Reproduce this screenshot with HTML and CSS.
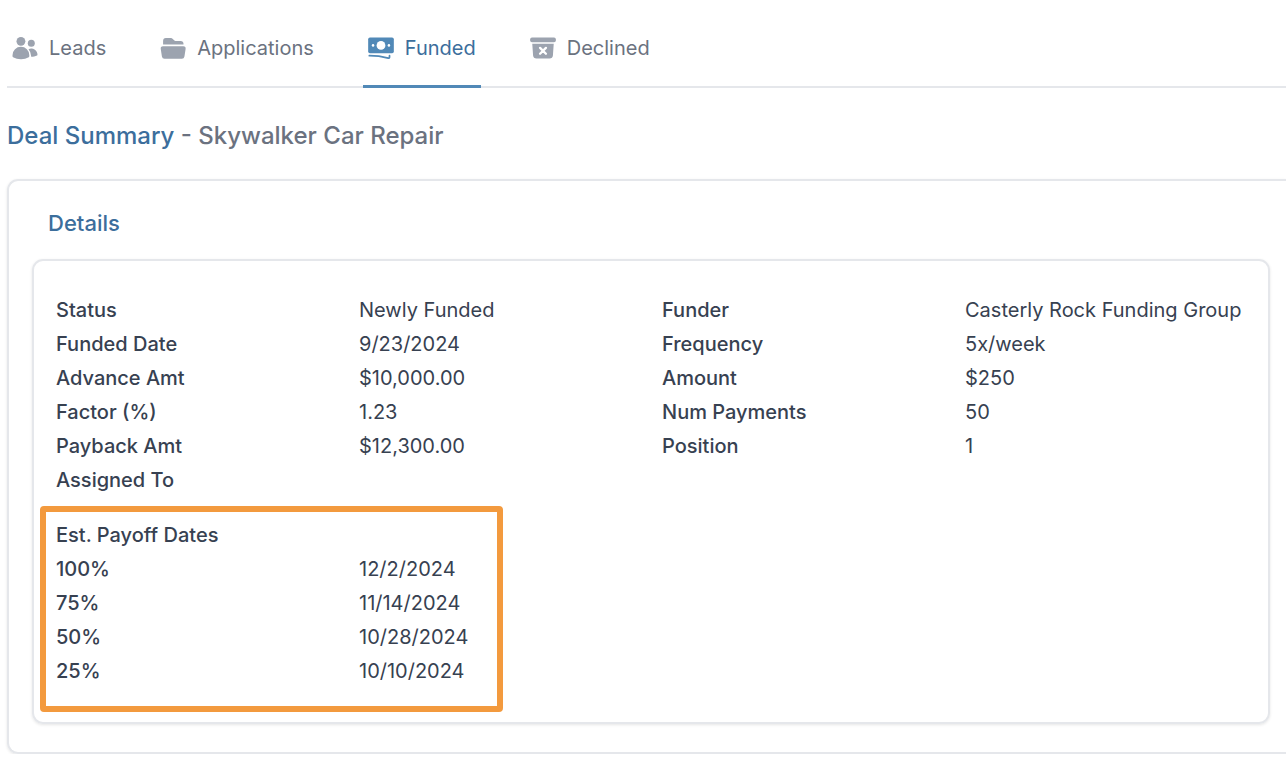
FILE: index.html
```html
<!DOCTYPE html>
<html lang="en">
<head>
    <meta charset="UTF-8">
    <meta name="viewport" content="width=device-width, initial-scale=1.0">
    <title>Deal Summary</title>
    <link rel="stylesheet" href="styles.css">
</head>
<body>
    <nav class="tabs">
        <a href="#leads" class="tab">
            <svg viewBox="0 0 24 24" aria-hidden="true">
                <circle cx="8.5" cy="6.3" r="3.8"/>
                <circle cx="17.4" cy="8" r="3"/>
                <path d="M1.3 18.2a7.2 7.2 0 0 1 14.4 0v.9c0 .4-.2.7-.5.9a13 13 0 0 1-6.7 1.7c-2.4 0-4.7-.6-6.7-1.7a1 1 0 0 1-.5-.9z"/>
                <path d="M17.3 19.5c1.8 0 3.5-.4 5-1.1.3-.2.4-.4.4-.7a5.3 5.3 0 0 0-7.7-4.7 9 9 0 0 1 2.2 5.6z"/>
            </svg>
            Leads
        </a>
        <a href="#applications" class="tab">
            <svg viewBox="0 0 24 24" aria-hidden="true">
                <path d="M3.5 6a2.5 2.500 0 0 1 2.4-2.500h4.300c.6 0 1.200.2 1.600.7l1.400 1.400c.2.2.5.3.8.3h4.500A2.500 2.500 0 0 1 21 8.400v.6H3.500z"/>
                <path d="M3.500 10.500h17.300a2 2 0 0 1 2 2.300l-1 6.500a2.300 2.300 0 0 1-2.200 1.900H4.700a2.300 2.300 0 0 1-2.200-1.900l-1-6.500a2 2 0 0 1 2-2.300z"/>
            </svg>
            Applications
        </a>
        <a href="#funded" class="tab active" aria-current="page">
            <svg viewBox="0 0 24 24" aria-hidden="true">
                <rect x="1" y="3" width="22" height="13.5" rx="1.5"/>
                <circle cx="12" cy="9.75" r="3.75" class="hole"/>
                <circle cx="5.2" cy="9.75" r="1.1" class="hole"/>
                <circle cx="18.8" cy="9.75" r="1.1" class="hole"/>
                <path d="M2 18.6c5.600 0 11 .7 16.200 2 .6.2 1.100-.2 1.100-.7v-1.300" class="stroke"/>
            </svg>
            Funded
        </a>
        <a href="#declined" class="tab">
            <svg viewBox="0 0 24 24" aria-hidden="true">
                <rect x="1" y="3" width="22" height="4" rx="1.500"/>
                <path d="M2.800 8.300l.7 10.100A2.900 2.900 0 0 0 6.400 21h11.200a2.900 2.900 0 0 0 2.900-2.600l.7-10.100z"/>
                <path d="M9.500 11.900l5 5m0-5l-5 5" class="cross"/>
            </svg>
            Declined
        </a>
    </nav>

    <h1><span>Deal Summary</span> - Skywalker Car Repair</h1>

    <section class="panel">
        <h2>Details</h2>
        <div class="card">
            <div class="column">
                <dl>
                    <dt>Status</dt><dd>Newly Funded</dd>
                    <dt>Funded Date</dt><dd>9/23/2024</dd>
                    <dt>Advance Amt</dt><dd>$10,000.00</dd>
                    <dt>Factor (%)</dt><dd>1.23</dd>
                    <dt>Payback Amt</dt><dd>$12,300.00</dd>
                    <dt>Assigned To</dt><dd></dd>
                </dl>
                <div class="payoff">
                    <h3>Est. Payoff Dates</h3>
                    <dl>
                        <dt>100%</dt><dd>12/2/2024</dd>
                        <dt>75%</dt><dd>11/14/2024</dd>
                        <dt>50%</dt><dd>10/28/2024</dd>
                        <dt>25%</dt><dd>10/10/2024</dd>
                    </dl>
                    <div class="highlight"></div>
                </div>
            </div>
            <div class="column">
                <dl>
                    <dt>Funder</dt><dd>Casterly Rock Funding Group</dd>
                    <dt>Frequency</dt><dd>5x/week</dd>
                    <dt>Amount</dt><dd>$250</dd>
                    <dt>Num Payments</dt><dd>50</dd>
                    <dt>Position</dt><dd>1</dd>
                </dl>
            </div>
        </div>
    </section>
</body>
</html>
```

FILE: styles.css
```css
* {
    box-sizing: border-box;
}

body {
    font-family: Inter, sans-serif;
    font-size: 20px;
    line-height: 34px;
    color: #374151;
    background-color: #fff;
    margin: 0;
    padding: 8px 0 0 7px;
}

h1, h2, h3, dl, dd {
    margin: 0;
}

/* Tabs */
.tabs {
    display: flex;
    gap: 44px;
    border-bottom: 2px solid #e5e7eb;
}

.tab {
    display: flex;
    align-items: center;
    gap: 10px;
    height: 80px;
    padding: 2px 5px 0 4px;
    margin-bottom: -2px;
    border-bottom: 3px solid transparent;
    color: #6b7280;
    text-decoration: none;
}

.tab svg {
    width: 28px;
    height: 28px;
    fill: #9ca3af;
}

.tab.active {
    color: #3c6e9c;
    border-bottom-color: #5189b7;
}

.tab.active svg {
    fill: #5189b7;
}

.tab .hole {
    fill: #fff;
}

.tab .stroke {
    fill: none;
    stroke: #5189b7;
    stroke-width: 1.5;
    stroke-linecap: round;
}

.tab .cross {
    stroke: #fff;
    stroke-width: 2;
    stroke-linecap: round;
}

h1 {
    font-size: 24px;
    font-weight: 500;
    color: #6b7280;
    padding: 31px 0 26px;
}

h1 span,
h2 {
    color: #3c6e9c;
}

/* Details panel */
.panel {
    border: 2px solid #e5e7eb;
    border-right: none;
    border-radius: 11px 0 0 11px;
    padding: 25px 16px 28px 23px;
    box-shadow: 0 1px 3px rgba(0, 0, 0, 0.1);
}

h2 {
    font-size: 22px;
    font-weight: 500;
    padding: 0 16px 19px;
}

.card {
    display: grid;
    grid-template-columns: 1fr 1fr;
    gap: 22px;
    border: 2px solid #e5e7eb;
    border-radius: 11px;
    padding: 32px 22px 34px;
    box-shadow: 0 1px 3px rgba(0, 0, 0, 0.1);
}

.column {
    display: flex;
    flex-direction: column;
    gap: 21px;
}

dl {
    display: grid;
    grid-template-columns: 1fr 1fr;
    column-gap: 22px;
}

dt,
h3 {
    font-size: 20px;
    font-weight: 500;
}

.payoff {
    position: relative;
}

.highlight {
    position: absolute;
    inset: -12px 137px -24px -16px;
    border: 6px solid #f39a3e;
    border-radius: 4px;
}
```
